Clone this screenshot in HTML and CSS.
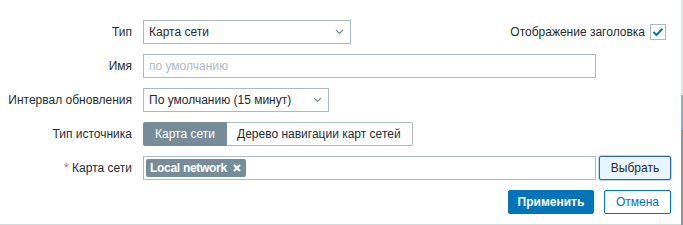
FILE: index.html
```html
<!DOCTYPE html>
<html lang="ru">
<head>
<meta charset="utf-8">
<title>Карта сети</title>
<link rel="stylesheet" href="styles.css">
</head>
<body>
<div class="page">
  <div class="dialog">
    <form class="form">
      <label class="lbl">Тип</label>
      <div class="field row-between">
        <div class="select w208">
          <span>Карта сети</span>
          <svg class="chev" width="9" height="6" viewBox="0 0 9 6"><polyline points="1,1 4.5,4.5 8,1" fill="none" stroke="#768d99" stroke-width="1.2"/></svg>
        </div>
        <div class="check-field">
          <span>Отображение заголовка</span>
          <span class="checkbox"><svg width="12" height="10" viewBox="0 0 12 10"><polyline points="1.5,5 4.5,8 10.5,1.8" fill="none" stroke="#0275b8" stroke-width="2"/></svg></span>
        </div>
      </div>

      <label class="lbl">Имя</label>
      <div class="field">
        <div class="input w453"><span class="ph">по умолчанию</span></div>
      </div>

      <label class="lbl">Интервал обновления</label>
      <div class="field">
        <div class="select w186">
          <span>По умолчанию (15 минут)</span>
          <svg class="chev" width="9" height="6" viewBox="0 0 9 6"><polyline points="1,1 4.5,4.5 8,1" fill="none" stroke="#768d99" stroke-width="1.2"/></svg>
        </div>
      </div>

      <label class="lbl">Тип источника</label>
      <div class="field">
        <div class="segmented">
          <span class="seg active">Карта сети</span>
          <span class="seg">Дерево навигации карт сетей</span>
        </div>
      </div>

      <label class="lbl"><span class="req">*</span> Карта сети</label>
      <div class="field row-gap">
        <div class="multiselect">
          <span class="tag">Local network <svg class="x" width="8" height="8" viewBox="0 0 8 8"><path d="M1 1 L7 7 M7 1 L1 7" stroke="#ffffff" stroke-width="2"/></svg></span>
        </div>
        <button type="button" class="btn-select">Выбрать</button>
      </div>

      <div class="actions">
        <button type="button" class="btn-primary">Применить</button>
        <button type="button" class="btn-alt">Отмена</button>
      </div>
    </form>
  </div>
  <div class="scrollbar"></div>
</div>
</body>
</html>
```

FILE: styles.css
```css
html, body {
  margin: 0;
  padding: 0;
  background: #ffffff;
}
body {
  font-family: "Liberation Sans", Arial, sans-serif;
  font-size: 12px;
  color: #1f2c33;
}
.page {
  display: flex;
  width: 683px;
  height: 225px;
}
.dialog {
  flex: 1;
  height: 224px;
  border-bottom: 1px solid #d3d9d8;
}
.scrollbar {
  width: 2px;
  height: 225px;
  background: linear-gradient(to bottom, #e3e7ea 0, #e3e7ea 95px, #7fb4de 95px, #7fb4de 130px, #8f969a 130px, #8f969a 100%);
}
.form {
  display: grid;
  grid-template-columns: 143px 1fr;
  row-gap: 10px;
  padding: 20px 10px 0 0;
  margin: 0;
}
.lbl {
  text-align: right;
  padding-right: 11px;
  line-height: 24px;
  height: 24px;
  white-space: nowrap;
}
.req {
  color: #e45959;
}
.field {
  display: flex;
  align-items: center;
  height: 24px;
}
.row-between {
  justify-content: space-between;
}
.row-gap {
  gap: 3px;
}
.select, .input, .multiselect {
  box-sizing: border-box;
  height: 24px;
  border: 1px solid #acbbc2;
  background: #ffffff;
  display: flex;
  align-items: center;
  padding: 0 5px;
}
.select {
  justify-content: space-between;
}
.chev {
  display: block;
  margin-right: 1px;
}
.w208 { width: 208px; }
.w186 { width: 186px; }
.w453 { width: 453px; }
.ph {
  color: #acbbc2;
}
.check-field {
  display: flex;
  align-items: center;
  gap: 5px;
  margin-right: 5px;
}
.checkbox {
  box-sizing: border-box;
  width: 16px;
  height: 16px;
  border: 1px solid #acbbc2;
  display: flex;
  align-items: center;
  justify-content: center;
}
.checkbox svg {
  display: block;
}
.segmented {
  display: flex;
  height: 24px;
}
.seg {
  box-sizing: border-box;
  height: 24px;
  line-height: 22px;
  border: 1px solid #acbbc2;
  padding: 0 10px;
  background: #ffffff;
  white-space: nowrap;
}
.seg:first-child {
  border-radius: 2px 0 0 2px;
}
.seg:last-child {
  border-left: none;
  border-radius: 0 2px 2px 0;
  width: 186px;
  padding: 0 0 0 10px;
}
.seg.active {
  background: #768d99;
  border-color: #768d99;
  color: #ffffff;
  width: 84px;
  text-align: center;
  padding: 0;
}
.multiselect {
  flex: 1;
  padding: 0 2px;
}
.tag {
  display: inline-flex;
  align-items: center;
  height: 18px;
  box-sizing: border-box;
  padding: 0 5px 0 4px;
  background: #768d99;
  color: #ffffff;
  font-weight: bold;
  letter-spacing: -0.3px;
  border-radius: 2px;
  white-space: nowrap;
}
.tag .x {
  display: block;
  margin-left: 6px;
}
button {
  font-family: "Liberation Sans", Arial, sans-serif;
  font-size: 12px;
  box-sizing: border-box;
  height: 24px;
  margin: 0;
  cursor: pointer;
}
.btn-select {
  width: 72px;
  height: 24px;
  background: #e8f5ff;
  border: 1px solid #2b6aa3;
  border-radius: 2px;
  color: #1f2c33;
  box-shadow: 0 0 0 1px #b7d7f0;
  padding: 0;
}
.actions {
  grid-column: 2;
  display: flex;
  justify-content: flex-end;
  gap: 10px;
  height: 24px;
}
.btn-primary {
  width: 86px;
  background: #0275b8;
  border: 1px solid #0275b8;
  color: #ffffff;
  font-weight: bold;
  border-radius: 2px;
  padding: 0;
}
.btn-alt {
  width: 67px;
  background: #ffffff;
  border: 1px solid #0275b8;
  color: #0275b8;
  border-radius: 2px;
  padding: 0;
}
```
